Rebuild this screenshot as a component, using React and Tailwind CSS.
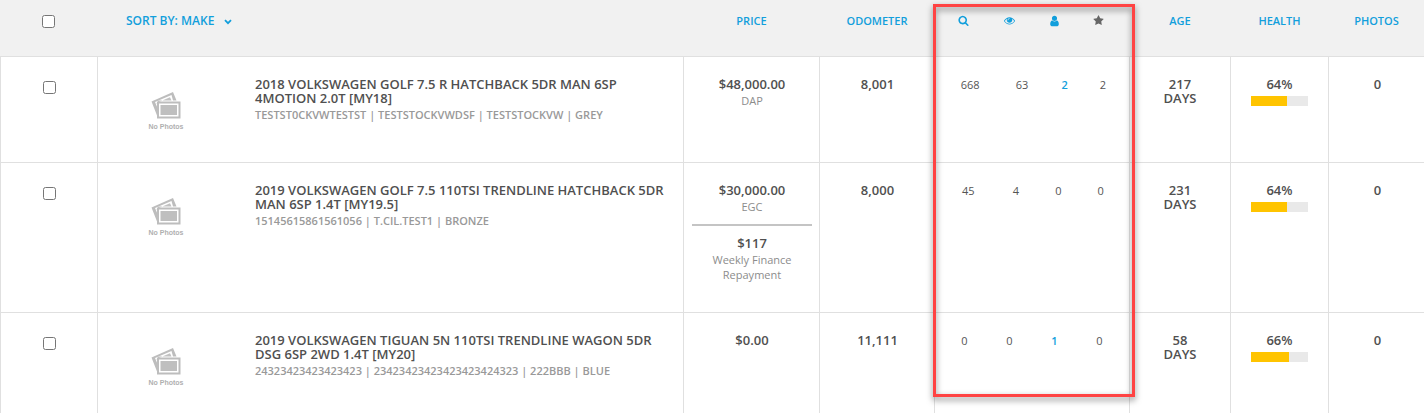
const icons = {
  search: {
    box: '64 0 1664 1792',
    size: 'h-[11px] w-[11px]',
    path: 'M1216 832q0-185-131.5-316.5t-316.5-131.5-316.5 131.5-131.5 316.5 131.5 316.5 316.5 131.5 316.5-131.5 131.5-316.5zm512 832q0 52-38 90t-90 38q-54 0-90-38l-343-342q-179 124-399 124-143 0-273.5-55.5t-225-150-150-225-55.5-273.5 55.5-273.5 150-225 225-150 273.5-55.5 273.5 55.5 225 150 150 225 55.5 273.5q0 220-124 399l343 343q37 37 37 90z',
  },
  eye: {
    box: '0 0 1792 1792',
    size: 'h-[11px] w-[11px]',
    path: 'M1664 960q-152-236-381-353 61 104 61 225 0 185-131.5 316.5t-316.5 131.5-316.5-131.5-131.5-316.5q0-121 61-225-229 117-381 353 133 205 333.5 326.5t434.5 121.5 434.5-121.5 333.5-326.5zm-720-384q0-20-14-34t-34-14q-125 0-214.5 89.5t-89.5 214.5q0 20 14 34t34 14 34-14 14-34q0-86 61-147t147-61q20 0 34-14t14-34zm848 384q0 34-20 69-140 230-376.5 368.5t-499.5 138.5-499.5-139-376.5-368q-20-35-20-69t20-69q140-229 376.5-368t499.5-139 499.5 139 376.5 368q20 35 20 69z',
  },
  user: {
    box: '256 0 1280 1792',
    size: 'h-[12px] w-[9px]',
    path: 'M1536 1399q0 109-62.5 187t-150.5 78h-854q-88 0-150.5-78t-62.5-187q0-85 8.5-160.5t31.5-152 58.5-131 94-89 134.5-34.5q131 128 313 128t313-128q76 0 134.5 34.5t94 89 58.5 131 31.5 152 8.5 160.5zm-256-887q0 159-112.5 271.5t-271.5 112.5-271.5-112.5-112.5-271.5 112.5-271.5 271.5-112.5 271.5 112.5 112.5 271.5z',
  },
  star: {
    box: '64 0 1664 1792',
    size: 'h-[11px] w-[11px]',
    path: 'M1728 647q0 22-26 48l-363 354 86 500q1 7 1 20 0 21-10.5 35.5t-30.5 14.5q-19 0-40-12l-449-236-449 236q-22 12-40 12-21 0-31.5-14.5t-10.5-35.5q0-6 2-20l86-500-364-354q-25-27-25-48 0-37 56-46l502-73 225-455q19-41 49-41t49 41l225 455 502 73q56 9 56 46z',
  },
};

const vehicles = [
  {
    title: '2018 VOLKSWAGEN GOLF 7.5 R HATCHBACK 5DR MAN 6SP 4MOTION 2.0T [MY18]',
    details: 'TESTST0CKVWTESTST | TESTSTOCKVWDSF | TESTSTOCKVW | GREY',
    price: '$48,000.00',
    priceType: 'DAP',
    odometer: '8,001',
    counts: [668, 63, 2, 2],
    age: 217,
    health: 64,
    photos: 0,
  },
  {
    title: '2019 VOLKSWAGEN GOLF 7.5 110TSI TRENDLINE HATCHBACK 5DR MAN 6SP 1.4T [MY19.5]',
    details: '15145615861561056 | T.CIL.TEST1 | BRONZE',
    price: '$30,000.00',
    priceType: 'EGC',
    weekly: '$117',
    odometer: '8,000',
    counts: [45, 4, 0, 0],
    age: 231,
    health: 64,
    photos: 0,
  },
  {
    title: '2019 VOLKSWAGEN TIGUAN 5N 110TSI TRENDLINE WAGON 5DR DSG 6SP 2WD 1.4T [MY20]',
    details: '24323423423423423 | 23423423423423423424323 | 222BBB | BLUE',
    price: '$0.00',
    odometer: '11,111',
    counts: [0, 0, 1, 0],
    age: 58,
    health: 66,
    photos: 0,
  },
];

function Icon({ name }) {
  const icon = icons[name];
  return (
    <svg viewBox={icon.box} className={`${icon.size} fill-current`} aria-hidden="true">
      <path d={icon.path} />
    </svg>
  );
}

function NoPhotos() {
  return (
    <div className="flex w-[81px] shrink-0 flex-col items-center pt-[14px] pr-[22px] pl-[29px] text-[#b0b0b0]">
      <svg viewBox="0 0 30 28" className="h-[28px] w-[30px]" aria-hidden="true">
        <path d="M0.5 10.5 22 1l3.500 8.500H22L20.500 4 4 11l3 7v9z" fill="#bdbdbd" />
        <path d="M5.500 12 19 6.200l1.500 3.300H7v6z" fill="#c2c2c2" />
        <path d="M6 10.500h23.500v17H6z" fill="#bdbdbd" />
        <path d="M8 12.500h19.500v13H8z" fill="#fff" />
        <path d="M9.500 14h16.500v10H9.500z" fill="#bfbfbf" />
      </svg>
      <span className="mt-[3px] font-['Liberation_Sans'] text-[7px] leading-[10px] font-bold whitespace-nowrap">No Photos</span>
    </div>
  );
}

function HeadCell({ label }) {
  return (
    <th scope="col" className="pt-[13px] pl-px text-center font-semibold">
      <button type="button" className="block w-full cursor-pointer">{label}</button>
    </th>
  );
}

// Small inner table so the four counters share the column by content width
function Counters({ children }) {
  return (
    <table className="w-full text-center text-[11px] leading-[15px]">
      <tbody>
        <tr>{children}</tr>
      </tbody>
    </table>
  );
}

function VehicleRow({ vehicle }) {
  return (
    <tr className="align-top *:border-t *:border-l *:border-[#e0e0e0] *:pt-[20px]">
      <td>
        <input type="checkbox" aria-label={`Select ${vehicle.title}`} className="mx-auto mt-[4px] block size-[13px]" />
      </td>
      <td className="pr-[14px] pb-[30px] pl-[24px]">
        <div className="flex gap-[52px]">
          <NoPhotos />
          <div className="min-w-0">
            <h3 className="text-[13px] leading-[14px] font-semibold">{vehicle.title}</h3>
            <p className="mt-[2px] text-[11px] leading-[15px] font-semibold text-[#999]">{vehicle.details}</p>
          </div>
        </div>
      </td>
      <td className="pr-[7px] pb-[30px] pl-[8px] text-center text-[11px] leading-[15px] font-normal text-[#8c8c8c]">
        <div className="mb-[2px] text-[13px] leading-[14px] font-semibold text-[#505050]">{vehicle.price}</div>
        {vehicle.priceType}
        {vehicle.weekly && (
          <div className="mt-[10px] border-t-2 border-[#c4c4c4] pt-[10px]">
            <div className="mb-[2px] text-[13px] leading-[14px] font-semibold text-[#505050]">{vehicle.weekly}</div>
            Weekly Finance Repayment
          </div>
        )}
      </td>
      <td className="pl-px text-center">{vehicle.odometer}</td>
      <td className="px-[7px] font-medium text-[#555]">
        <Counters>
          {vehicle.counts.map((count, i) => (
            <td key={i} className="px-[10px]">
              {i === 2 && count > 0 ? <a href="#leads" className="font-semibold text-[#129fdc]">{count}</a> : count}
            </td>
          ))}
        </Counters>
      </td>
      <td className="text-center">
        {vehicle.age}
        <br />
        DAYS
      </td>
      <td className="text-center">
        {vehicle.health}%
        <div className="mx-auto mt-[5px] h-[10px] w-[57px] bg-[#e9e9e9]">
          <div className="h-full bg-[#ffc400]" style={{ width: `${vehicle.health}%` }} />
        </div>
      </td>
      <td className="pl-[2px] text-center">{vehicle.photos}</td>
    </tr>
  );
}

export default function App() {
  return (
    <div className="relative bg-white font-['Open_Sans',sans-serif] text-[#505050]">
      <table className="w-full table-fixed border-separate border-spacing-0 text-[13px] leading-[14px] font-semibold">
        <colgroup>
          <col className="w-[97px]" />
          <col />
          <col className="w-[136px]" />
          <col className="w-[115px]" />
          <col className="w-[195px]" />
          <col className="w-[101px]" />
          <col className="w-[98px]" />
          <col className="w-[96px]" />
        </colgroup>
        <thead className="bg-[#f1f1f1] text-[11px] leading-[15px] text-[#129fdc]">
          <tr className="h-[56px] align-top">
            <th scope="col" className="pt-[15px]">
              <input type="checkbox" aria-label="Select all" className="mx-auto block size-[13px]" />
            </th>
            <th scope="col" className="pt-[13px] pl-[29px] text-left font-semibold">
              <button type="button" aria-haspopup="menu" className="flex cursor-pointer items-center gap-[10px] text-[12px]">
                SORT BY: MAKE
                <svg viewBox="0 0 8 6" className="mt-[2px] h-[6px] w-[8px]" fill="none" stroke="currentColor" strokeWidth="1.800" aria-hidden="true">
                  <path d="M1 1.200 4 4.200 7 1.200" />
                </svg>
              </button>
            </th>
            <HeadCell label="PRICE" />
            <HeadCell label="ODOMETER" />
            <th scope="col" className="px-[7px] pt-[13px]">
              <Counters>
                {['search', 'eye', 'user', 'star'].map((name) => (
                  <td key={name} className="px-[10px]">
                    <button
                      type="button"
                      aria-label={name}
                      className={`mx-auto flex h-[15px] cursor-pointer items-center ${name === 'star' ? 'text-[#666]' : ''}`}
                    >
                      <Icon name={name} />
                    </button>
                  </td>
                ))}
              </Counters>
            </th>
            <HeadCell label="AGE" />
            <HeadCell label="HEALTH" />
            <HeadCell label="PHOTOS" />
          </tr>
        </thead>
        <tbody>
          {vehicles.map((vehicle) => (
            <VehicleRow key={vehicle.title} vehicle={vehicle} />
          ))}
        </tbody>
      </table>
      {/* Callout frame over the counters column */}
      <div className="pointer-events-none absolute top-[4px] right-[289px] h-[393px] w-[202px] border-3 border-[#ff4343] drop-shadow-[0_3px_3px_rgba(0,0,0,0.5)]" />
    </div>
  );
}
